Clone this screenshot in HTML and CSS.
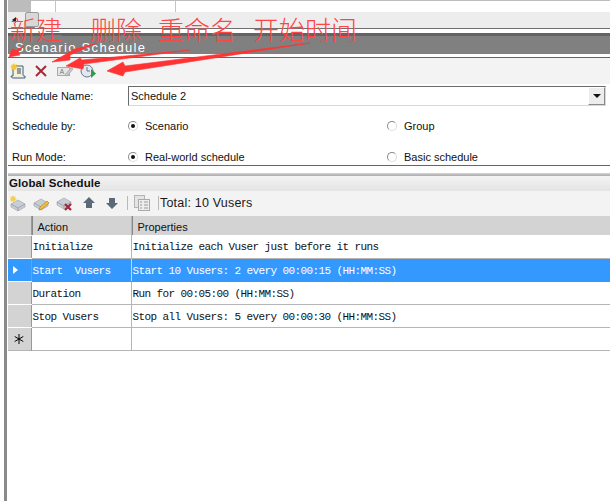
FILE: index.html
```html
<!DOCTYPE html>
<html lang="en">
<head>
  <meta charset="UTF-8" />
  <title>Scenario Schedule</title>
  <link rel="stylesheet" href="styles.css">
</head>
<body>
  <div class="window">
    <div class="top-grid">
      <div class="top-cell top-head"></div>
      <div class="top-cell top-a"></div>
      <div class="top-cell top-b"></div>
      <div class="top-cell"></div>
    </div>
    <div class="scroll-strip">
      <span class="scroll-arrow"></span>
      <span class="scroll-thumb"></span>
    </div>

    <h1 class="panel-title">Scenario Schedule</h1>
    <div class="toolbar top-tools">
      <svg class="icon" viewBox="0 0 16 16">
        <path d="M3 3h10v9c0 1 1 1 2 1v2H4c-1 0-3 0-3-2h2z" fill="#f4f0dc" stroke="#3f5f7f"/>
        <path d="M7 6h4M7 8h4M7 10h4" stroke="#345" fill="none"/>
        <path d="M4 0l1 2 2-1-1 2 2 1-2 1 1 2-2-1-1 2-1-2-2 1 1-2-2-1 2-1-1-2 2 1z" fill="#f7c531"/>
      </svg>
      <svg class="icon del" viewBox="0 0 16 16">
        <path d="M3 3l10 10M13 3L3 13" stroke="#a8283a" stroke-width="2" fill="none"/>
      </svg>
      <svg class="icon ren" viewBox="0 0 16 16">
        <rect x="0.5" y="4.5" width="12" height="8" fill="#e6e6e6" stroke="#aaa"/>
        <path d="M3 11l2-5 2 5M4 9.5h2" stroke="#999" fill="none"/>
        <path d="M8 12l6-7 2 1-6 7z" fill="#ccc" stroke="#aaa"/>
      </svg>
      <svg class="icon run" viewBox="0 0 16 16">
        <circle cx="7" cy="8" r="6" fill="#e4e8ee" stroke="#66788c"/>
        <path d="M7 4v4h3" stroke="#66788c" fill="none"/>
        <path d="M11 6l5 4.500-5 4.500z" fill="#2f9a4a"/>
      </svg>
    </div>

    <div class="form">
      <div class="form-row name-row">
        <label class="form-label">Schedule Name:</label>
        <div class="combo">
          <span class="combo-value">Schedule 2</span>
          <span class="combo-btn"></span>
        </div>
      </div>
      <div class="form-row by-row">
        <span class="form-label">Schedule by:</span>
        <div class="radio-cell"><span class="radio checked"></span>Scenario</div>
        <div class="radio-cell"><span class="radio"></span>Group</div>
      </div>
      <div class="form-row mode-row">
        <span class="form-label">Run Mode:</span>
        <div class="radio-cell"><span class="radio checked"></span>Real-world schedule</div>
        <div class="radio-cell"><span class="radio"></span>Basic schedule</div>
      </div>
    </div>

    <div class="split"></div>

    <h2 class="section-title">Global Schedule</h2>
    <div class="toolbar grid-tools">
      <svg class="icon" viewBox="0 0 16 16">
        <path d="M1 9l7-4 7 4v3l-7 4-7-4z" fill="#c9ced4" stroke="#9aa0a8" stroke-width=".6"/>
        <path d="M1 9l7 4 7-4M8 13v3" stroke="#8d939b" fill="none" stroke-width=".7"/>
        <path d="M3 0l1 2 2-1-1 2 2 1-2 1 1 2-2-1-1 1-1-1-2 1 1-2-1-1 1-1-1-2 2 1z" fill="#f5cf55"/>
      </svg>
      <svg class="icon" viewBox="0 0 16 16">
        <path d="M1 8l7-4 7 4v3l-7 4-7-4z" fill="#c9ced4" stroke="#9aa0a8" stroke-width=".6"/>
        <path d="M1 8l7 4 7-4M8 12v3" stroke="#8d939b" fill="none" stroke-width=".7"/>
        <path d="M6 15l1-3 7-6 2 2-7 6z" fill="#f2c230" stroke="#a8752a" stroke-width=".6"/>
      </svg>
      <svg class="icon" viewBox="0 0 16 16">
        <path d="M1 7l7-4 7 4v3l-7 4-7-4z" fill="#c9ced4" stroke="#9aa0a8" stroke-width=".6"/>
        <path d="M1 7l7 4 7-4M8 11v3" stroke="#8d939b" fill="none" stroke-width=".7"/>
        <path d="M9 9l6 6M15 9l-6 6" stroke="#a3263a" stroke-width="2.200"/>
      </svg>
      <svg class="icon small up" viewBox="0 0 14 14">
        <path d="M7 1l6 6H10v5H4V7H1z" fill="#5b6a78"/>
      </svg>
      <svg class="icon small" viewBox="0 0 14 14">
        <path d="M7 13L1 7h3V2h6v5h3z" fill="#5b6a78"/>
      </svg>
      <span class="tool-sep"></span>
      <svg class="icon" viewBox="0 0 16 16">
        <rect x="0.500" y="0.500" width="10" height="12" fill="#e4e4e4" stroke="#b5b5b5"/>
        <rect x="4.500" y="4.500" width="11" height="11" fill="#eee" stroke="#aaa"/>
        <path d="M6 7h2M10 7h4M6 10h2M10 10h4M6 13h2M10 13h4" stroke="#999" fill="none"/>
      </svg>
      <span class="tool-sep"></span>
      <span class="total">Total: 10 Vusers</span>
    </div>

    <table class="sched">
      <thead>
        <tr><th class="row-head"></th><th class="col-action">Action</th><th>Properties</th></tr>
      </thead>
      <tbody>
        <tr><td class="row-head"></td><td>Initialize</td><td>Initialize each Vuser just before it runs</td></tr>
        <tr class="selected"><td class="row-head"><span class="row-arrow"></span></td><td>Start  Vusers</td><td>Start 10 Vusers: 2 every 00:00:15 (HH:MM:SS)</td></tr>
        <tr><td class="row-head"></td><td>Duration</td><td>Run for 00:05:00 (HH:MM:SS)</td></tr>
        <tr><td class="row-head"></td><td>Stop Vusers</td><td>Stop all Vusers: 5 every 00:00:30 (HH:MM:SS)</td></tr>
        <tr><td class="row-head"><svg class="star" viewBox="0 0 10 10"><path d="M5 0v10M0.700 2.500l8.600 5M9.300 2.500l-8.600 5" stroke="#000" fill="none"/></svg></td><td></td><td></td></tr>
      </tbody>
    </table>
  </div>

  <div class="notes">
    <span class="note n1">新建</span>
    <span class="note n2">删除</span>
    <span class="note n3">重命名</span>
    <span class="note n4">开始时间</span>
    <svg class="arrows" viewBox="0 0 610 501">
      <path d="M24 46L16 50 12 49 9 57 20 55 18 52z"/>
      <path d="M97 43L72 50 75 49 52 62 70 60 70 55z"/>
      <path d="M190 50L82 60 80 58 66 66 83 69 84 64z"/>
      <path d="M310 43L125 66 123 62 107 71 123 76 125 72z"/>
    </svg>
  </div>
</body>
</html>
```

FILE: styles.css
```css
* { margin: 0; padding: 0; box-sizing: border-box; }
html, body {
  width: 610px;
  height: 501px;
  overflow: hidden;
  background: #fff;
  font-family: "Liberation Sans", Arial, sans-serif;
  font-size: 11px;
  color: #111;
}
body { padding-left: 4px; }

.window {
  height: 501px;
  border-left: 3px solid #8a8a8a;
  padding-left: 1px;
  overflow: hidden;
}

/* leftover grid and scrollbar above the panel */
.top-grid {
  display: flex;
  height: 12px;
  border-top: 1px solid #bdbdbd;
}
.top-cell { height: 11px; border-right: 1px solid #c4c4c4; }
.top-cell:last-child { flex: 1; border-right: 0; }
.top-head { width: 23px; background: #bcbcbc; border-right: 0; }
.top-a { width: 25px; }
.top-b { width: 120px; }

.scroll-strip {
  display: flex;
  align-items: flex-start;
  height: 17px;
  background: #ededed;
  border-bottom: 1px solid #6f6f6f;
}
.scroll-arrow {
  width: 0;
  height: 0;
  margin: 5px 0 0 4px;
  border: 3px solid transparent;
  border-right: 4px solid #222;
  border-left: 0;
}
.scroll-thumb {
  width: 14px;
  height: 15px;
  margin-left: 9px;
  background: #d8d8d8;
  border: 1px solid #9a9a9a;
  border-radius: 2px;
}

.panel-title {
  margin-top: 4px;
  height: 24px;
  padding: 5px 0 0 7px;
  background: #808080;
  border-top: 3px solid #646464;
  border-bottom: 3px solid #fff;
  box-shadow: 0 1px 0 #646464;
  color: #fff;
  font-size: 13px;
  font-weight: 400;
  letter-spacing: 1.3px;
  line-height: 14px;
}

.toolbar {
  display: flex;
  align-items: center;
  background: #f3f3f3;
}
.icon { display: block; width: 16px; height: 16px; flex: none; }
.top-tools { height: 26px; margin-top: 1px; padding-left: 2px; gap: 7px; }
.top-tools .ren { margin-left: 1px; }

.form { height: 81px; padding: 2px 0 0 4px; overflow: hidden; }
.form-row { display: flex; align-items: center; }
.form-label { width: 116px; flex: none; }
.name-row { height: 20px; }
.by-row { margin-top: 12px; height: 16px; }
.mode-row { margin-top: 15px; height: 16px; }
.combo {
  display: flex;
  align-items: center;
  justify-content: space-between;
  width: 478px;
  height: 20px;
  padding-left: 2px;
  border: 1px solid #d8d8d8;
  border-top-color: #6b6b6b;
  border-left-color: #6b6b6b;
}
.combo-btn {
  position: relative;
  width: 17px;
  height: 18px;
  background: #ededed;
  border: 1px solid #8a8a8a;
  border-top-color: #fff;
  border-left-color: #fff;
}
.combo-btn::after {
  content: "";
  position: absolute;
  top: 6px;
  left: 4px;
  border: 4px solid transparent;
  border-top: 4px solid #111;
  border-bottom: 0;
}
.radio-cell {
  display: flex;
  align-items: center;
  flex: none;
  width: 259px;
}
.radio {
  position: relative;
  width: 10px;
  height: 10px;
  margin-right: 7px;
  background: #fff;
  border: 1px solid #8b8b8b;
  border-bottom-color: #ddd;
  border-right-color: #ddd;
  border-radius: 50%;
}
.radio.checked::after {
  content: "";
  position: absolute;
  top: 2px;
  left: 2px;
  width: 4px;
  height: 4px;
  background: #111;
  border-radius: 50%;
}

.split {
  height: 11px;
  border-top: 1px solid #666;
  background: linear-gradient(#fff 0 7px, #d6d6d6 7px, #aaa 100%);
}

.section-title {
  height: 15px;
  padding-left: 1px;
  background: linear-gradient(#f3f3f3, #e4e4e4);
  font-size: 11.5px;
  font-weight: 700;
  letter-spacing: .1px;
  line-height: 15px;
}
.grid-tools { height: 25px; padding: 0 0 2px 2px; gap: 7px; }
.grid-tools .small { width: 14px; height: 14px; }
.grid-tools .up { margin-left: 3px; margin-right: 2px; }
.tool-sep { width: 1px; height: 14px; background: #b9b9b9; margin: 0 -1px 0 1px; }
.total { font-size: 12.5px; letter-spacing: .2px; margin-left: -5px; color: #1a1a1a; }

.sched {
  width: 603px;
  border-collapse: collapse;
  table-layout: fixed;
  font-family: "Liberation Mono", monospace;
  font-size: 11px;
  letter-spacing: -.6px;
  white-space: pre;
  border-bottom: 1px solid #b5b5b5;
}
.sched th {
  height: 19px;
  padding: 2px 0 0 6px;
  background: #d3d3d3;
  border-right: 1px solid #b5b5b5;
  box-shadow: inset 1px 0 0 #888;
  font-family: "Liberation Sans", Arial, sans-serif;
  font-size: 11px;
  font-weight: 400;
  letter-spacing: 0;
  text-align: left;
}
.sched td {
  height: 23px;
  padding: 2px 0 0 1px;
  border-right: 1px solid #b5b5b5;
  border-bottom: 1px solid #b5b5b5;
}
.sched .row-head {
  width: 23px;
  padding: 0;
  background: #d3d3d3;
  border-bottom: 1px solid #fff;
  border-right: 1px solid #999;
  box-shadow: none;
}
.col-action { width: 100px; }
.sched tr:last-child td { border-bottom: 0; }
.selected td { background: #3399ff; color: #fff; border-bottom-color: #3399ff; }
.selected td + td { border-right-color: #bcd9f5; }
.sched .selected .row-head { background: #3399ff; }
.row-arrow {
  display: block;
  width: 0;
  height: 0;
  margin-left: 5px;
  border: 4px solid transparent;
  border-left: 5px solid #fff;
  border-right: 0;
}
.star { display: block; width: 10px; height: 10px; margin: 0 auto; }

/* red annotations drawn over the screenshot */
.notes { position: absolute; top: 0; left: 0; width: 610px; height: 501px; }
.note {
  position: absolute;
  top: 11px;
  font-family: "Noto Sans CJK SC", sans-serif;
  font-size: 26px;
  font-weight: 300;
  line-height: 36px;
  color: #f44;
}
.n1 { left: 10px; }
.n2 { left: 90px; }
.n3 { left: 158px; }
.n4 { left: 253px; }
.arrows { position: absolute; top: 0; left: 0; width: 610px; height: 501px; }
.arrows path { fill: #f33; stroke: #f33; stroke-width: .6; }
```
